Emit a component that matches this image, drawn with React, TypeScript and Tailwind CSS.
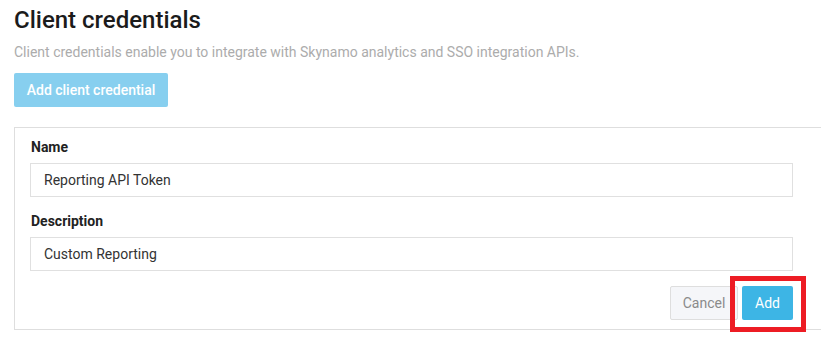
import React from 'react';

export default function App() {
  return (
    <div className="w-[821px] h-[339px] overflow-hidden bg-white pl-[14px] pt-[6px] font-['Roboto','Liberation_Sans',sans-serif]">
      <h1 className="text-[24px] leading-[28px] font-medium text-[#1b1b1b]">Client credentials</h1>
      <p className="mt-[8px] text-[14px] leading-[20px] text-[#acacac]">
        Client credentials enable you to integrate with Skynamo analytics and SSO integration APIs.
      </p>
      <button className="mt-[11px] h-[34px] w-[154px] rounded-[2px] bg-[#87cfef] text-[14px] font-medium text-white">
        Add client credential
      </button>

      <div className="mt-[20px] w-[850px] border border-[#dedede] pl-[15px] pt-[9px] pb-[9px]">
        <div className="w-[763px]">
          <label className="block pl-[1px] text-[14px] leading-[20px] font-bold text-[#222]">Name</label>
          <div className="mt-[6px] flex h-[34px] items-center border border-[#e0e0e0] px-[13px] text-[14px] text-[#333]">
            Reporting API Token
          </div>
          <label className="mt-[14px] block pl-[1px] text-[14px] leading-[20px] font-bold text-[#222]">Description</label>
          <div className="mt-[6px] flex h-[34px] items-center border border-[#e0e0e0] px-[13px] text-[14px] text-[#333]">
            Custom Reporting
          </div>
          <div className="mt-[15px] flex justify-end gap-[4px]">
            <button className="h-[34px] w-[68px] rounded-[2px] border border-[#dedede] bg-[#f5f6f9] text-[14px] text-[#8a8a8a]">
              Cancel
            </button>
            <div className="relative">
              <button className="h-[34px] w-[51px] rounded-[2px] bg-[#3db5e5] text-[14px] text-white">Add</button>
              <div className="pointer-events-none absolute left-[-12px] top-[-10px] h-[56px] w-[76px] border-[5px] border-[#ed1c24]" />
            </div>
          </div>
        </div>
      </div>
    </div>
  );
}
